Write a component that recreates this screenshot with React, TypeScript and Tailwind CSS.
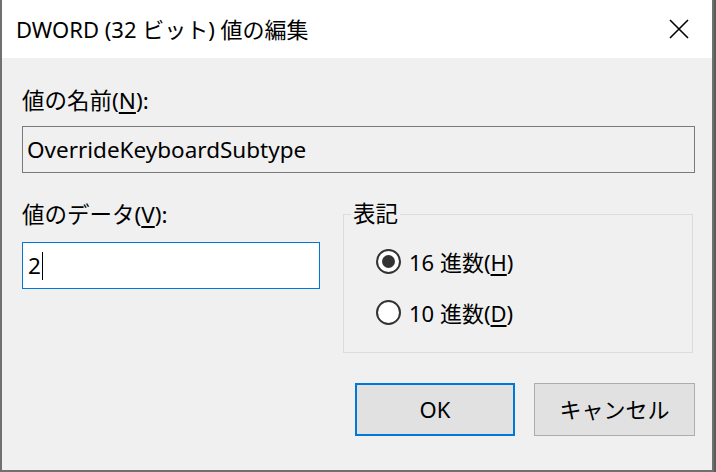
const FONT = "font-['Noto_Sans','Noto_Sans_CJK_JP',sans-serif]";

function Radio({ checked, label, mnemonic }: { checked: boolean; label: string; mnemonic: string }) {
  return (
    <div className="flex items-center gap-[8px]">
      <div className="flex h-[25px] w-[25px] items-center justify-center rounded-full border-2 border-[#333333] bg-white">
        {checked && <div className="h-[13px] w-[13px] rounded-full bg-[#333333]" />}
      </div>
      <span className="text-[22px] leading-none text-black">
        {label}(<span className="underline underline-offset-[3px]">{mnemonic}</span>)
      </span>
    </div>
  );
}

export default function App() {
  return (
    <div className={`flex h-[472px] w-[716px] bg-[#5a5a5a] ${FONT}`}>
      <div className="flex h-[472px] w-[714px] flex-col border-x-2 border-b-2 border-[#707070]">
        {/* Title bar */}
        <div className="flex h-[58px] items-center justify-between bg-white pl-[14px] pr-[22px]">
          <span className="text-[22px] text-black">DWORD (32 ビット) 値の編集</span>
          <svg width="20" height="20" viewBox="0 0 20 20" className="mr-[1px]">
            <path d="M1 1 L19 19 M19 1 L1 19" stroke="#000" strokeWidth="1.6" fill="none" />
          </svg>
        </div>

        {/* Body */}
        <div className="flex flex-1 flex-col bg-[#f0f0f0] pl-[20px] pr-[17px] pt-[28px]">
          <div className="text-[22.5px] leading-[30px] text-black">
            値の名前(<span className="underline underline-offset-[3px]">N</span>):
          </div>
          <div className="mt-[10px] flex h-[47px] items-center border border-[#7a7a7a] bg-[#f0f0f0] pl-[4px] text-[22.5px] text-black">
            OverrideKeyboardSubtype
          </div>

          <div className="mt-[29px] flex gap-[23px]">
            <div className="flex w-[298px] flex-col">
              <div className="-mt-[2px] text-[22.5px] leading-[30px] text-black">
                値のデータ(<span className="underline underline-offset-[3px]">V</span>):
              </div>
              <div className="mt-[12px] flex h-[47px] items-center border border-[#0078d7] bg-white pl-[5px] text-[22.5px] text-black">
                2<span className="ml-[1px] h-[28px] w-px bg-black" />
              </div>
            </div>

            <div className="relative mt-[12px] h-[139px] w-[350px] border border-[#dcdcdc]">
              <span className="absolute -top-[16px] left-[7px] bg-[#f0f0f0] px-[2px] text-[22.5px] leading-[30px] text-black">
                表記
              </span>
              <div className="flex flex-col gap-[26px] pl-[32px] pt-[34px]">
                <Radio checked label="16 進数" mnemonic="H" />
                <Radio checked={false} label="10 進数" mnemonic="D" />
              </div>
            </div>
          </div>

          <div className="mt-[30px] flex justify-end gap-[19px]">
            <button className="flex h-[53px] w-[160px] items-center justify-center border-2 border-[#0078d7] bg-[#e1e1e1] text-[22px] text-black">
              OK
            </button>
            <button className="flex h-[53px] w-[161px] items-center justify-center border border-[#adadad] bg-[#e1e1e1] text-[22px] text-black">
              キャンセル
            </button>
          </div>
        </div>
      </div>
    </div>
  );
}
